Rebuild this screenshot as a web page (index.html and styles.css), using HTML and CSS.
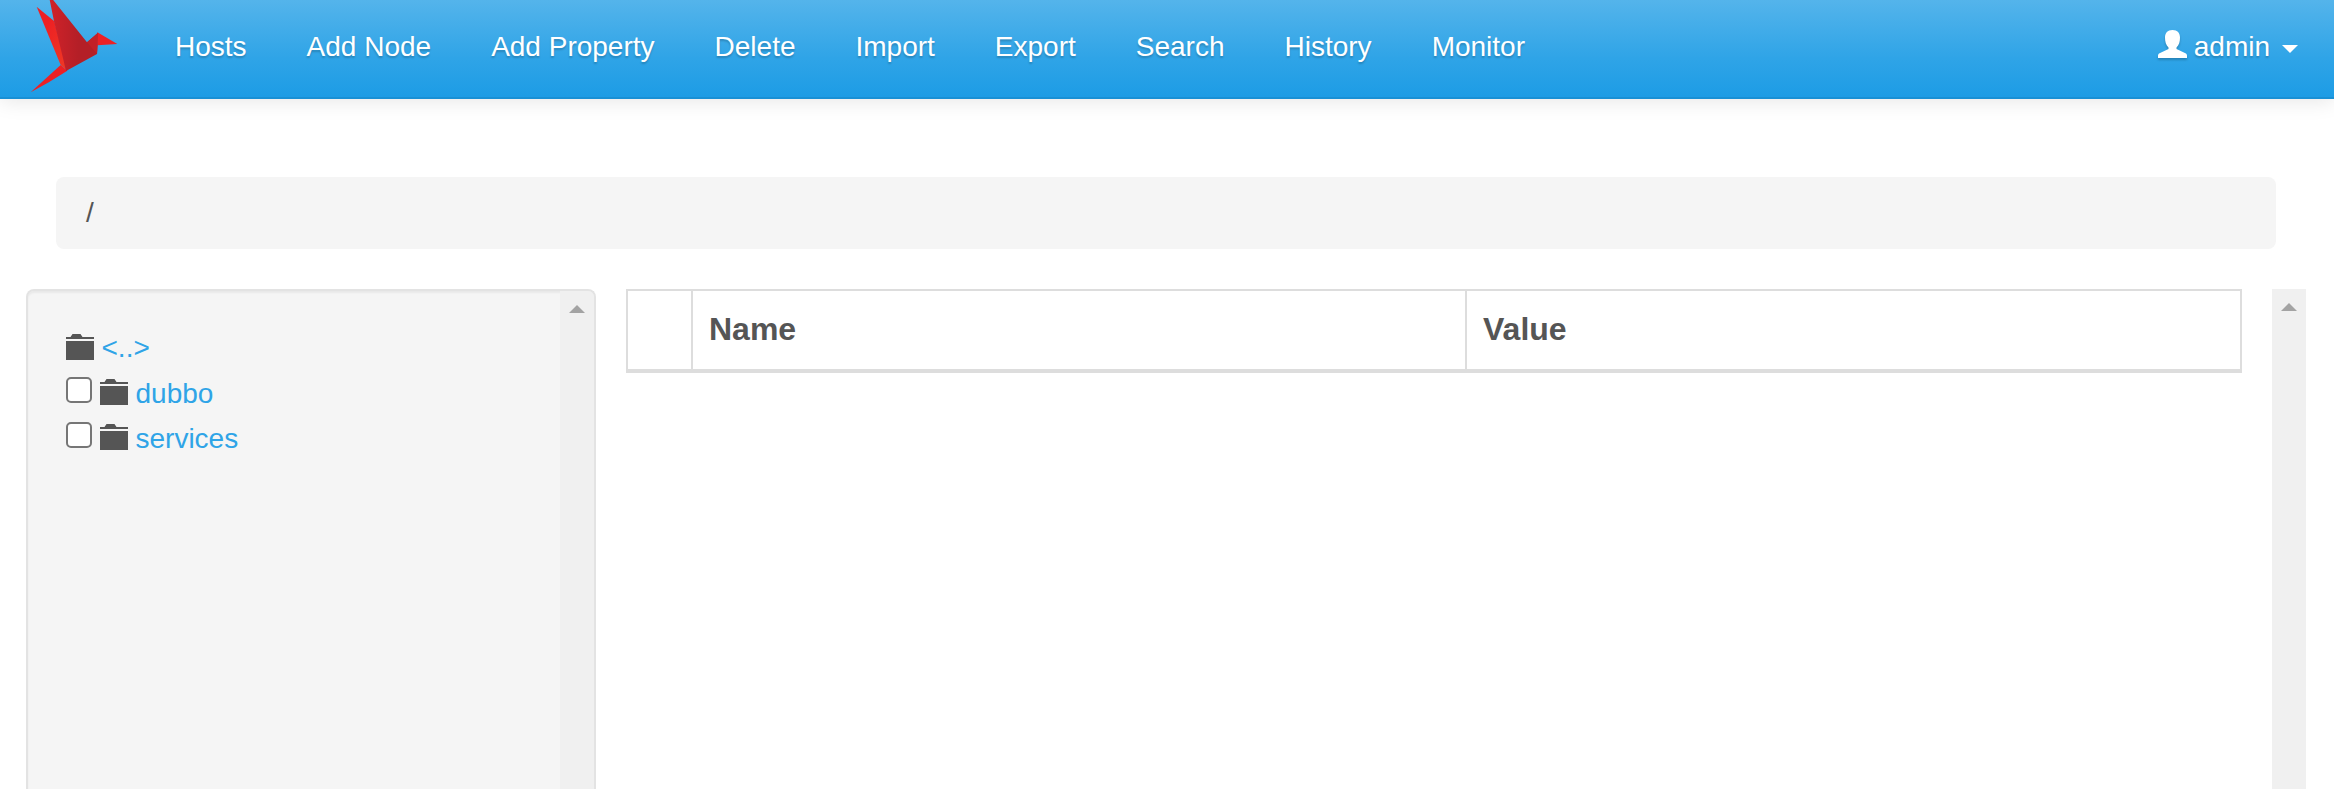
FILE: index.html
```html
<!DOCTYPE html>
<html lang="en">
<head>
<meta charset="utf-8">
<title>Nodes</title>
<link rel="stylesheet" href="styles.css">
</head>
<body>
<header class="navbar">
  <a class="logo"><svg width="120" height="97" viewBox="0 0 360 291">
    <defs><linearGradient id="wing" x1="0" y1="0" x2="1" y2="0"><stop offset="0" stop-color="#d12229"/><stop offset=".6" stop-color="#b41f27"/><stop offset="1" stop-color="#b41f27"/></linearGradient>
    <linearGradient id="back" x1="0" y1="0" x2="1" y2="1"><stop offset=".3" stop-color="#ed2024"/><stop offset="1" stop-color="#ef3a24"/></linearGradient></defs>
    <path fill="#ed2024" d="M182 195L202 212Q150 246 92 277Z"/>
    <path fill="url(#back)" d="M110 20L163 64L202 212L182 195Z"/>
    <path fill="url(#wing)" d="M148 -6L158 -2L261 127L294 98L291 162L198 213L186 162L162 64Z"/>
    <path fill="#ed2024" d="M292 97L352 132L292 136Z"/>
    <path fill="#c32027" d="M261 127L294 98L293 136L291 162Z"/>
  </svg></a>
  <nav class="nav">
    <a>Hosts</a><a>Add Node</a><a>Add Property</a><a>Delete</a><a>Import</a><a>Export</a><a>Search</a><a>History</a><a>Monitor</a>
  </nav>
  <a class="user">
    <svg class="user-icon" width="29" height="28" viewBox="0 0 29 28"><path fill="#fff" d="M14.500 0C19.500 0 22 3 22 7.500C22 12 21 15 18.500 17.500V19L28 23.500Q29 24.300 29 25.500V28H0V25.500Q0 24.300 1 23.500L10.500 19V17.500C8 15 7 12 7 7.500C7 3 9.500 0 14.500 0Z"/></svg>
    <span>admin</span><i class="caret"></i>
  </a>
</header>
<main class="page">
  <div class="breadcrumb">/</div>
  <div class="columns">
    <aside class="well">
      <div class="tree">
        <div class="node parent"><svg class="folder" width="28" height="26" viewBox="0 0 28 26"><path d="M0 3H4.500L6.500 0H14.500L16.500 3H28V5H0ZM0 7H28V26H0Z"/></svg><a>&lt;..&gt;</a></div>
        <div class="node"><input type="checkbox" class="check"><svg class="folder" width="28" height="26" viewBox="0 0 28 26"><path d="M0 3H4.500L6.500 0H14.500L16.500 3H28V5H0ZM0 7H28V26H0Z"/></svg><a>dubbo</a></div>
        <div class="node"><input type="checkbox" class="check"><svg class="folder" width="28" height="26" viewBox="0 0 28 26"><path d="M0 3H4.500L6.500 0H14.500L16.500 3H28V5H0ZM0 7H28V26H0Z"/></svg><a>services</a></div>
      </div>
      <div class="scrollbar"><svg width="16" height="8" viewBox="0 0 16 8"><path d="M0 8L8 0L16 8Z"/></svg></div>
    </aside>
    <section class="content">
      <div class="table"><div class="th"></div><div class="th">Name</div><div class="th">Value</div></div>
      <div class="scrollbar"><svg width="16" height="8" viewBox="0 0 16 8"><path d="M0 8L8 0L16 8Z"/></svg></div>
    </section>
  </div>
</main>
</body>
</html>
```

FILE: styles.css
```css
* { box-sizing: border-box; }
body {
  margin: 0;
  height: 789px;
  overflow: hidden;
  display: flex;
  flex-direction: column;
  background: #fff;
  color: #555;
  font: 28px/40px "Liberation Sans", Arial, sans-serif;
}
.navbar {
  flex: none;
  display: flex;
  height: 99px;
  border-bottom: 2px solid #1990d5;
  background: linear-gradient(#54b4eb, #2fa4e7 60%, #1d9ce5);
  box-shadow: 0 2px 20px rgba(0, 0, 0, .1);
  color: #fff;
  text-shadow: 0 2px 2px rgba(0, 0, 0, .2);
}
.logo { width: 145px; height: 97px; }
.logo svg, .folder, .user-icon, .scrollbar svg { display: block; }
.nav { display: flex; padding-top: 27px; }
.nav a { padding: 0 30px; white-space: nowrap; }
.user { display: flex; margin-left: auto; padding: 27px 36px 0 0; }
.user-icon { margin: 3px 7px 0 0; filter: drop-shadow(0 2px 1px rgba(0, 0, 0, .2)); }
.caret {
  margin: 18px 0 0 12px;
  width: 16px;
  height: 8px;
  background: #fff;
  clip-path: polygon(0 0, 100% 0, 50% 100%);
}
.page { flex: 1; display: flex; flex-direction: column; min-height: 0; padding: 78px 28px 0 26px; }
.breadcrumb {
  flex: none;
  height: 72px;
  margin: 0 30px 40px;
  padding: 16px 30px;
  border-radius: 8px;
  background: #f5f5f5;
}
.columns { flex: 1; display: flex; gap: 30px; min-height: 0; }
.well {
  display: flex;
  width: 570px;
  border: 2px solid #e3e3e3;
  border-bottom: 0;
  border-radius: 8px 8px 0 0;
  background: #f5f5f5;
  box-shadow: inset 0 2px 2px rgba(0, 0, 0, .05);
  overflow: hidden;
}
.tree { flex: 1; padding: 35px 38px; }
.node { display: flex; height: 45px; line-height: 45px; }
.node.parent { line-height: 43px; }
.node a { color: #2fa4e7; }
.folder { flex: none; margin: 8px 7.5px 0 0; fill: #555; }
.check {
  appearance: none;
  flex: none;
  width: 26px;
  height: 26px;
  margin: 6px 8px 0 0;
  border: 2px solid #767676;
  border-radius: 5px;
  background: #fff;
}
.scrollbar { width: 34px; padding: 14px 9px; background: #f0f0f0; fill: #a3a3a3; }
.content { flex: 1; display: flex; justify-content: space-between; }
.table {
  display: grid;
  grid-template-columns: 63px 774px 1fr;
  width: 1616px;
  height: 84px;
  border: 2px solid #ddd;
  border-bottom-width: 4px;
  font-size: 32px;
  font-weight: bold;
}
.th { padding: 18px 16px; }
.th + .th { border-left: 2px solid #ddd; }
```
